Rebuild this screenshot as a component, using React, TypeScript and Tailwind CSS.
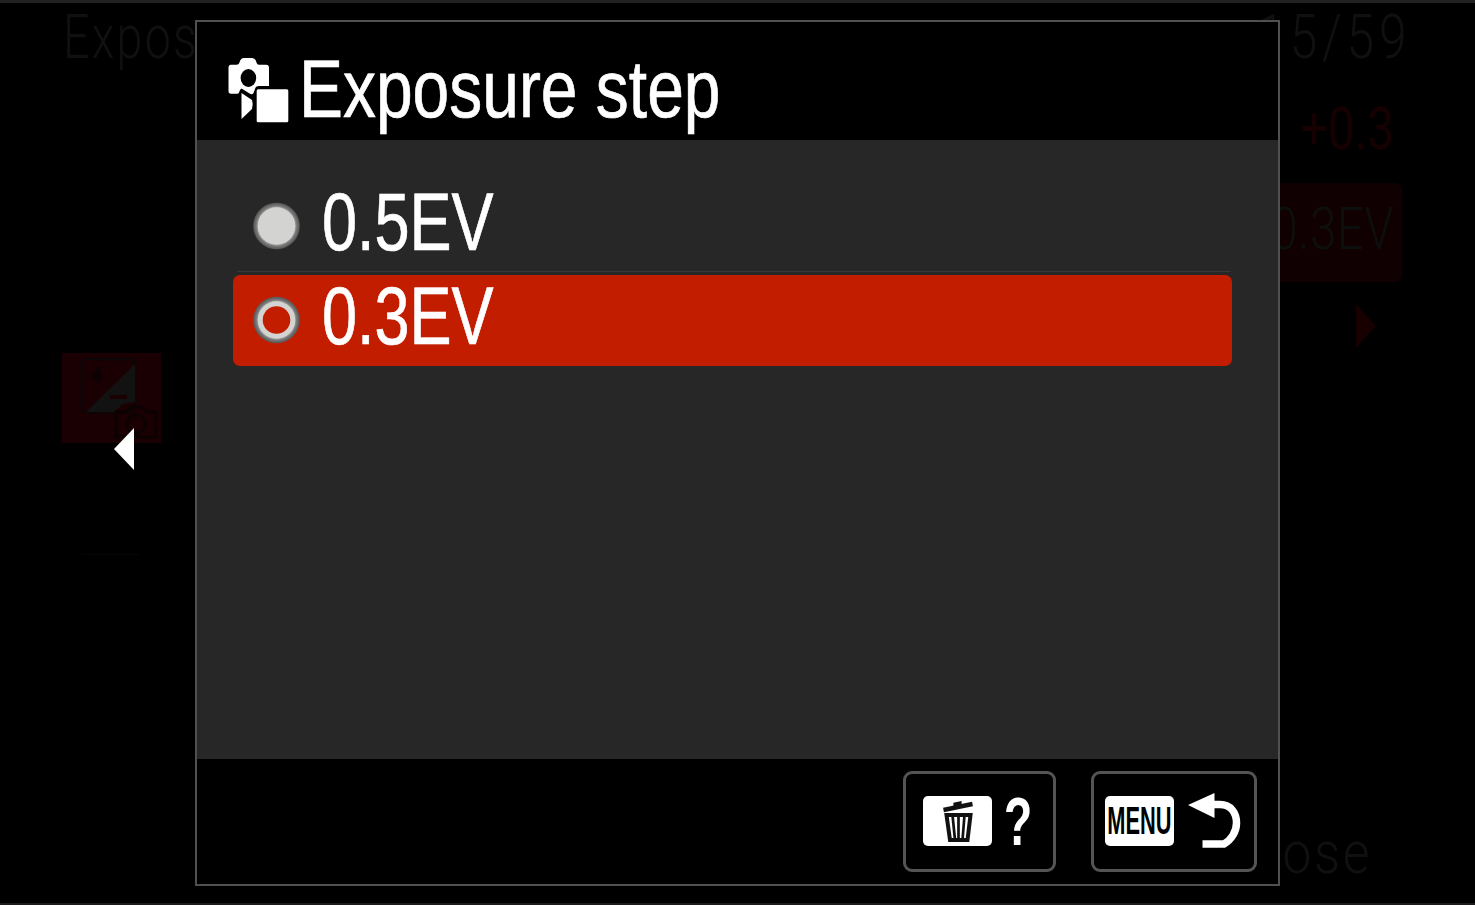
import type { ReactNode } from "react";

function Radio({ selected = false }: { selected?: boolean }) {
  return (
    <svg className="h-12 w-12 shrink-0" viewBox="0 0 48 48" fill="none">
      <defs>
        <radialGradient id="radio-rim" gradientUnits="userSpaceOnUse" cx="24.500" cy="24" r="24">
          <stop offset="0.76" stopColor="#a8a8a6" />
          <stop offset="0.84" stopColor="#7a7a7a" />
          <stop offset="0.94" stopColor="#5c5c5c" />
          <stop offset="1" stopColor="#5c5c5c" stopOpacity="0.2" />
        </radialGradient>
      </defs>
      <circle cx="24.500" cy="24" r="23.500" fill="url(#radio-rim)" />
      <circle cx="24.500" cy="24" r="18.800" fill="#d3d3d1" />
      {selected && <circle cx="24.500" cy="24" r="13.800" fill="#c31d00" />}
    </svg>
  );
}

function CameraStepIcon() {
  return (
    <svg className="mt-[35px] h-[66px] w-[62px] shrink-0" viewBox="0 0 62 66">
      <path
        d="M3 7.700H9Q11 7.500 11.500 5.500Q12.500 1 16 1H24Q27.500 1 28.500 5.500Q29 7.700 31 7.700H38Q41 7.700 41 10.700V29H31Q27.500 29 27 32L25.500 36Q24.500 38 22 36.800L13.500 31.500Q12 32 11 35.500Q10.500 36.700 9 36.700H3Q0.500 36.700 0.500 34V10.700Q0.500 7.700 3 7.700Z"
        fill="#fff"
      />
      <ellipse cx="20.400" cy="21" rx="7.800" ry="9" fill="#000" />
      <path d="M13.500 36L24 43Q25.500 47 24 52L13.500 62Z" fill="#fff" />
      <rect x="28.700" y="32.300" width="31.600" height="33" rx="1.500" fill="#fff" />
    </svg>
  );
}

function TrashIcon() {
  return (
    <svg className="h-[44px] w-[32px]" viewBox="0 0 32 44" fill="none" stroke="#111">
      <path d="M1.500 11L30.500 5" strokeWidth="4.400" />
      <path d="M13 8V5L18 4V7" strokeWidth="3.200" />
      <path d="M4.500 16H28.500L25.500 41H8Z" strokeWidth="4" />
      <path d="M10.500 16L13 41M16.500 16V41M22.500 16L20.500 41" strokeWidth="2.700" />
    </svg>
  );
}

function ReturnIcon() {
  return (
    <svg className="h-[58px] w-[53px]" viewBox="0 0 53 58" fill="none">
      <path d="M0 13L26.500 1V26Z" fill="#fff" />
      <path d="M25 12.500H32C43 12.500 48.500 21 48.500 31C48.500 40 43 48 36 52H14.500" stroke="#fff" strokeWidth="7.500" />
    </svg>
  );
}

function FooterButton({ className, children }: { className: string; children: ReactNode }) {
  return (
    <button className={"flex h-[101px] items-center rounded-[9px] border-[3px] border-[#545454] " + className}>
      {children}
    </button>
  );
}

function Badge({ children }: { children: ReactNode }) {
  return (
    <span className="flex h-[50px] w-[69px] shrink-0 items-center justify-center rounded-[5px] bg-white text-black">
      {children}
    </span>
  );
}

const label =
  "block origin-left whitespace-nowrap text-[81.5px] leading-[80px] [-webkit-text-stroke:0.7px_white]";

function DimmedMenu() {
  return (
    <div className="flex h-full justify-between pr-[68px] pl-[62px] font-['Roboto',sans-serif] font-light text-[#101010]">
      <div className="w-[133px]">
        <div className="pt-[3px] pl-px text-[62px] leading-[62px] whitespace-nowrap">
          <span className="block origin-left scale-x-[0.75] tracking-[3px]">Exposu</span>
        </div>
        <div className="mt-[285px] h-[90px] w-[99px] bg-[#1a0003] pt-[5px] pl-[18px]">
          <svg className="h-[82px] w-[80px]" viewBox="0 0 80 82" fill="none">
            <rect x="2" y="1" width="53" height="53" rx="5" stroke="#0b0608" strokeWidth="2.500" />
            <path d="M55 6V44L43 46L34 54H6Z" fill="#121212" />
            <path d="M11 18H23M18 9V25" stroke="#0d0103" strokeWidth="5" />
            <path d="M30 39H47" stroke="#1a0003" strokeWidth="4" />
            <path d="M36 54H46L50 49H62L66 54H76V79H36Z" stroke="#0c0103" strokeWidth="3" />
            <circle cx="56" cy="66" r="9" stroke="#0c0103" strokeWidth="3" />
          </svg>
        </div>
        <div className="mt-[111px] ml-5 h-px w-[58px] bg-[#060606]" />
      </div>
      <div className="flex w-[180px] flex-col items-end">
        <span className="-mr-[4px] block origin-right scale-x-[0.8] pt-[3px] text-[62px] leading-[62px] tracking-[6px]">
          15/59
        </span>
        <span className="mt-[31px] mr-[13px] block origin-right scale-x-[0.8] text-[60px] leading-[60px] font-normal text-[#170001]">
          +0.3
        </span>
        <div className="mt-[24px] mr-[5px] flex h-[99px] w-[180px] items-center justify-end rounded-lg bg-[#110001] pr-[8px] pb-[8px]">
          <span className="block origin-right scale-x-[0.78] text-[60px] leading-[60px] tracking-[1px] text-[#0d0f0f]">
            0.3EV
          </span>
        </div>
        <svg className="mt-[22px] mr-[31px] h-[44px] w-5" viewBox="0 0 20 44">
          <path d="M0 0L20 22L0 44Z" fill="#180001" />
        </svg>
        <span className="mt-[475px] mr-[35px] block origin-right scale-x-[0.86] text-[60px] leading-[60px] tracking-[3px]">
          ose
        </span>
      </div>
    </div>
  );
}

export default function App() {
  return (
    <main className="relative h-[905px] w-[1475px] overflow-hidden border-t-[3px] border-b-2 border-t-[#222] border-b-[#1c1a1b] bg-black font-['Liberation_Sans',Arial,sans-serif] text-white">
      <DimmedMenu />

      <svg className="absolute top-[425px] left-[114px] h-[42px] w-5" viewBox="0 0 20 42">
        <path d="M20 0V42L0 21Z" fill="#fff" />
      </svg>

      <section className="absolute top-[17px] left-[195px] flex h-[866px] w-[1085px] flex-col border-2 border-[#505050] bg-black">
        <header className="flex h-[118px] shrink-0 gap-[9px] pl-[31px]">
          <CameraStepIcon />
          <h1 className={"mt-[27px] scale-x-[0.809] " + label}>Exposure step</h1>
        </header>

        <div className="h-[619px] shrink-0 bg-[#272727] pt-[41px] pl-[36px]">
          <div className="flex h-[90px] w-[999px] items-center pl-[19px]">
            <Radio />
            <span className={"-mt-2 ml-[22px] scale-x-[0.773] " + label}>0.5EV</span>
          </div>
          <div className="ml-1 h-px w-[994px] bg-[#393939]" />
          <div className="mt-[3px] flex h-[91px] w-[999px] items-center rounded-[7px] bg-[#c31d00] pb-[2px] pl-[19px]">
            <Radio selected />
            <span className={"-mt-2 ml-[22px] scale-x-[0.773] " + label}>0.3EV</span>
          </div>
        </div>

        <footer className="flex grow items-center justify-end gap-[35px] pr-[21px] pb-px">
          <FooterButton className="w-[153px] pl-[17px]">
            <Badge>
              <TrashIcon />
            </Badge>
            <span className="ml-[12px] block origin-left scale-x-[0.68] text-[68px] leading-[67px] font-bold">?</span>
          </FooterButton>
          <FooterButton className="w-[166px] pl-[11px]">
            <Badge>
              <span className="block shrink-0 scale-x-[0.56] text-[39px] leading-[40px] font-bold">MENU</span>
            </Badge>
            <span className="ml-[14px] block shrink-0">
              <ReturnIcon />
            </span>
          </FooterButton>
        </footer>
      </section>
    </main>
  );
}
